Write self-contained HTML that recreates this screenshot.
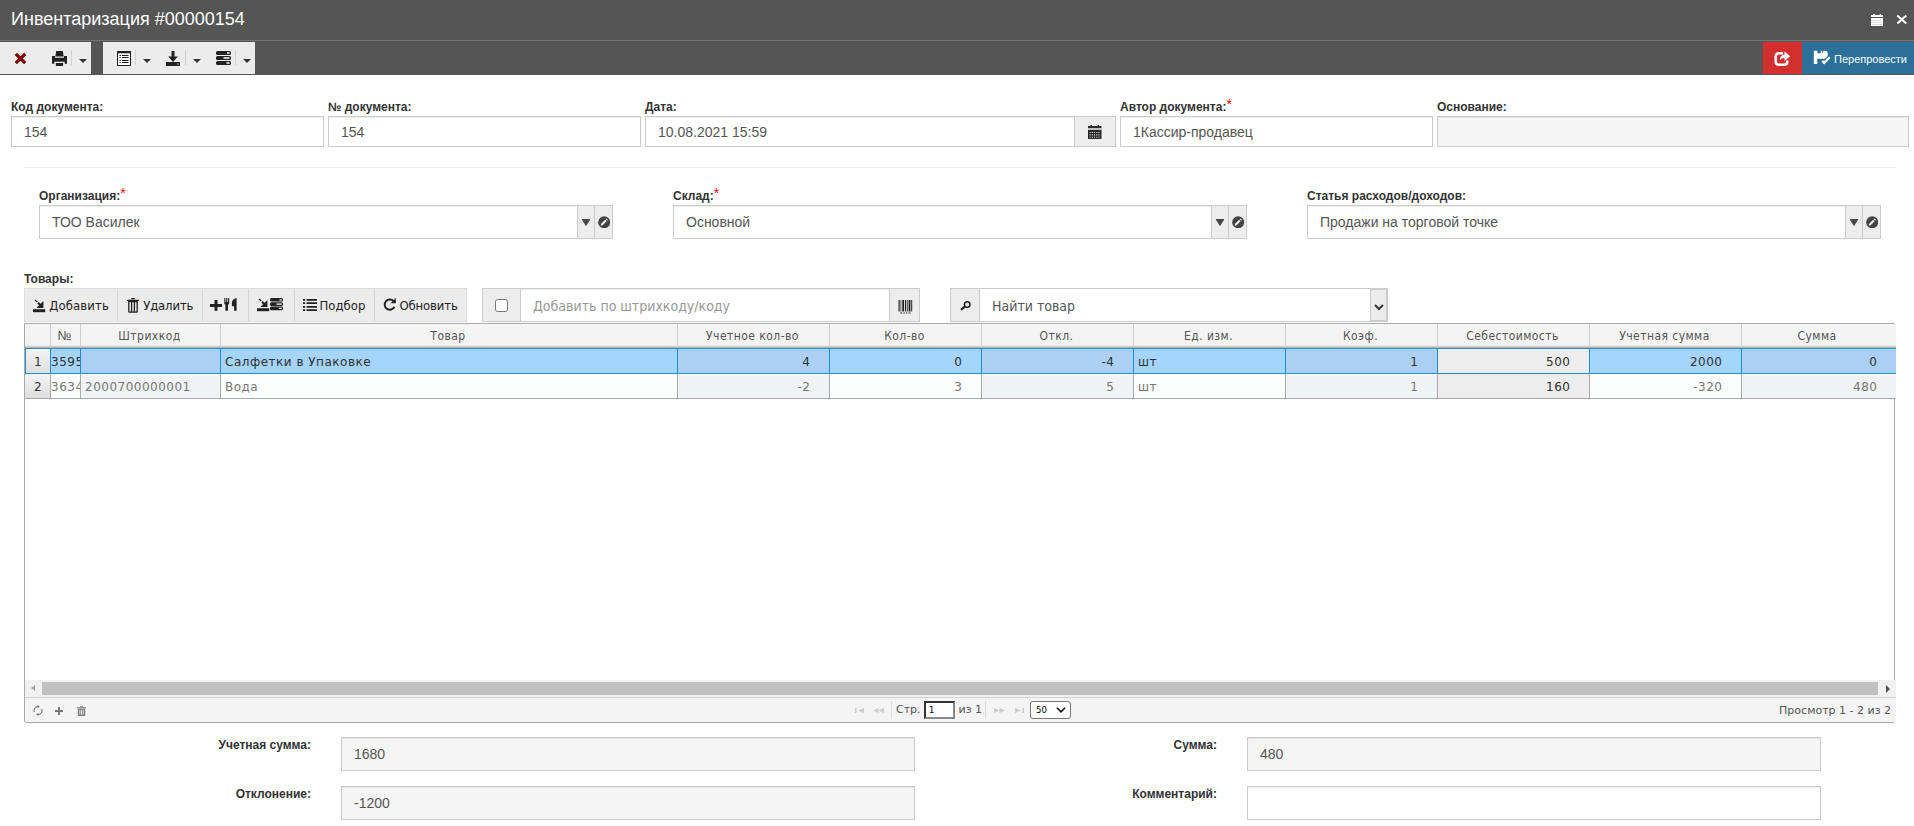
<!DOCTYPE html>
<html lang="ru">
<head>
<meta charset="utf-8">
<title>Инвентаризация #00000154</title>
<style>
*{box-sizing:border-box;margin:0;padding:0}
html,body{width:1914px;height:826px;overflow:hidden;background:#fff}
body{position:relative;font-family:"Liberation Sans",Arial,sans-serif;font-size:14px;color:#333}
.abs{position:absolute}
#titlebar{position:absolute;left:0;top:0;width:1914px;height:41px;background:#555;border-bottom:1px solid #757575}
#titlebar .t{position:absolute;left:11px;top:8px;font-size:18px;line-height:22px;color:#fff;white-space:nowrap}
#toolbar{position:absolute;left:0;top:41px;width:1914px;height:34px;background:#555}
.tg{position:absolute;top:1px;height:32px;background:#ececec}
.tsep{position:absolute;top:8px;width:1px;height:15px;background:#d0d0d0}
.caret{position:absolute;width:0;height:0;border-left:4px solid transparent;border-right:4px solid transparent;border-top:4px solid #333}
.lbl{position:absolute;font-weight:bold;font-size:12px;line-height:14px;color:#333;white-space:nowrap}
.lbl .rq{color:#f00;font-weight:normal;font-size:14px;line-height:10px;position:relative;top:-2px}
.inp{position:absolute;height:31px;border:1px solid #ccc;background:#fff;font-size:14px;line-height:31px;color:#555;padding:0 12px;white-space:nowrap;overflow:hidden;box-shadow:inset 0 1px 1px rgba(0,0,0,.075)}
.inp.h34{height:34px;line-height:33px}
.inp.dis{background:#f5f5f5}
.addon{position:absolute;border:1px solid #ccc;background:#ededed}
.tri{position:absolute;left:0;top:0;width:9px;height:7.200px;background:#444;clip-path:polygon(0 0,100% 0,50% 100%);transform:translate(3.500px,13px)}
.ed{left:2.800px;top:10.100px}
.gtb{position:absolute;left:24px;top:288px;width:443px;height:34px;background:#ececec;border:1px solid #ddd}
.gb{position:absolute;top:0;height:32px;border-right:1px solid #d4d4d4}
.gb .tx{position:absolute;top:9px;font-family:"DejaVu Sans Condensed","DejaVu Sans",sans-serif;font-size:13px;line-height:16px;color:#222;white-space:nowrap}
.ig{position:absolute;top:288px;height:34px}
.ph{font-family:"DejaVu Sans Condensed","DejaVu Sans",sans-serif;font-size:14px}
.inp.h34.ph{line-height:35px}
#grid{position:absolute;left:24px;top:323px;width:1871px;height:400px;border:1px solid #aaa;border-radius:0 0 2px 2px;background:#fff}
#ghead{position:absolute;left:0;top:0;width:1871px;height:24px;background:linear-gradient(#f5f5f5 0,#f3f3f3 21px,#e6e6e6 22px,#bdb5af 23px,#bdb5af 24px)}
.hc{position:absolute;top:0;height:23px;border-right:1px solid #cfcfcf;font-family:"DejaVu Sans Condensed","DejaVu Sans",sans-serif;font-size:12px;letter-spacing:.45px;line-height:14px;padding:5px 2px 0 0;text-align:center;color:#555;white-space:nowrap;overflow:hidden}
.gr{position:absolute;left:0;width:1871px;font-family:"DejaVu Sans",sans-serif;font-size:12px;letter-spacing:.5px;white-space:nowrap}
.gc{position:absolute;top:0;height:100%;overflow:hidden;padding:0 0 0 4px;line-height:27px}
.r1{top:24px;height:26px;border-top:1px solid #1b8fd0;border-bottom:1px solid #1b8fd0;color:#303030;background:#a5d4fd}
.r1 .gc{border-right:1px solid #1b8fd0;box-shadow:inset 0 1px 0 #b4dcff, inset 0 2px 0 rgba(110,150,190,.16)}
.r1 .g{background:#abd0f3}
.r2{top:50px;height:25px;border-bottom:1px solid #aaa;color:#777;background:#fbfdfd}
.r2 .gc{border-right:1px solid #aaa;line-height:26px;box-shadow:inset 0 1px 0 #fff}
.r2 .g{background:#f0f3f4}
.r1::before{content:"";position:absolute;left:0;top:0;width:1px;height:100%;background:#1b8fd0;z-index:2}
.gc.rn{background:linear-gradient(#f4f4f4,#dedede);color:#333;text-align:center;padding:0 0 0 1px;box-shadow:none!important}
.gc.num{text-align:right;padding-right:18.500px}
.gc.last{border-right:0!important;padding-right:18.500px}
.hc.last{border-right:0}
.gc.cost{background:#ededed!important;color:#303030;box-shadow:none!important}
#hs{position:absolute;left:0;top:356px;width:1871px;height:17px;background:#f1f1f1}
#pager{position:absolute;left:0;top:373px;width:1871px;height:25px;border-top:1px solid #d3d3d3;background:#f4f4f4;border-radius:0 0 2px 2px;font-family:"DejaVu Sans",sans-serif;font-size:11px;color:#555}
.bl{position:absolute;font-weight:bold;font-size:12px;line-height:14px;color:#333;white-space:nowrap;text-align:right}
.inp.ro{background:#f5f5f5}
</style>
</head>
<body>
<div id="titlebar"><div class="t">Инвентаризация #00000154</div>
  <svg class="abs" style="left:1870.800px;top:14px" width="12.200" height="12.200" viewBox="0 0 12.200 12.200"><path fill="#fff" d="M2.300 0h1.400v1.500H2.300zM8.700 0h1.400v1.500H8.700zM0 .9h12.200v2H0zM0 4h12.200v8.200H0z"/><path fill="#b8b8b8" d="M1.45 6.05h.9v.9h-.9zM3.45 6.05h.9v.9h-.9zM5.45 6.05h.9v.9h-.9zM7.45 6.05h.9v.9h-.9zM9.45 6.05h.9v.9h-.9zM1.45 8.05h.9v.9h-.9zM3.45 8.05h.9v.9h-.9zM5.45 8.05h.9v.9h-.9zM7.45 8.05h.9v.9h-.9zM9.45 8.05h.9v.9h-.9zM1.45 10.05h.9v.9h-.9zM3.45 10.05h.9v.9h-.9zM5.45 10.05h.9v.9h-.9zM7.45 10.05h.9v.9h-.9zM9.45 10.05h.9v.9h-.9z"/></svg>
  <svg class="abs" style="left:1896px;top:14px" width="12" height="11" viewBox="0 0 12 11"><path stroke="#fff" stroke-width="2.100" fill="none" d="M1.300 1.500l9 8M10.300 1.500l-9 8"/></svg>
</div>
<div id="toolbar">
  <div class="tg" style="left:0;width:91px">
    <svg class="abs" style="left:14px;top:10px" width="13" height="13" viewBox="0 0 13 13"><path stroke="#800000" stroke-width="3.3" fill="none" d="M1.8 1.8l9.4 9.4M11.2 1.8l-9.4 9.4"/></svg>
    <svg class="abs" style="left:52px;top:9px" width="15" height="15" viewBox="0 0 15 15"><path fill="#222" d="M4.200 .1h6.600l.9 5.400H3.300zM0 5h3v1.700h9V5h3v7.700h-2.300v-2H2.300v2H0zM3.900 12h7.200v3H3.900z"/></svg>
    <div class="tsep" style="left:71px"></div>
    <div class="caret" style="left:79px;top:17px"></div>
  </div>
  <div class="tg" style="left:103px;width:152px">
    <svg class="abs" style="left:14px;top:9px" width="14" height="15" viewBox="0 0 14 15"><path fill="#222" d="M0 0h14v15H0z"/><path fill="#fff" d="M1 2.300h12V14H1z"/><path fill="#222" d="M2.500 4h1.300v1H2.500zM5 4h6.500v1H5zM2.500 6h1.300v1H2.500zM5 6h6.500v1H5zM2.500 9h1.300v1H2.500zM5 9h6.500v1H5zM2.500 11h1.300v1H2.500zM5 11h6.500v1H5z"/></svg>
    <div class="tsep" style="left:32px"></div>
    <div class="caret" style="left:40px;top:17px"></div>
    <svg class="abs" style="left:63px;top:9px" width="14" height="15" viewBox="0 0 14 15"><path fill="#222" d="M5.500 0h3v5.500h3.300L7 11 2.200 5.500h3.300zM0 11h14v4H0z"/><path fill="#ececec" d="M11.300 12.400h1.400v1.200h-1.400z"/></svg>
    <div class="tsep" style="left:82px"></div>
    <div class="caret" style="left:90px;top:17px"></div>
    <svg class="abs" style="left:113px;top:9px" width="15" height="14" viewBox="0 0 15 14"><rect x="0" y="0" width="15" height="4" rx="1.600" fill="#222"/><rect x="0" y="5" width="15" height="4" rx="1.600" fill="#222"/><rect x="0" y="10" width="15" height="4" rx="1.600" fill="#222"/><path fill="#fff" d="M11 1.300h2.500v1.400H11zM7.500 6.300h6v1.400h-6zM10.500 11.300h3v1.400h-3z"/></svg>
    <div class="tsep" style="left:132px"></div>
    <div class="caret" style="left:140px;top:17px"></div>
  </div>
  <div class="abs" style="left:1763px;top:1px;width:39px;height:32px;background:#d32f2f">
    <svg class="abs" style="left:11px;top:9px" width="17" height="16" viewBox="0 0 17 16"><path fill="none" stroke="#fff" stroke-width="2.500" d="M9 2.200H5Q1.700 2.200 1.700 5.500V10.500Q1.700 13.800 5 13.800H10Q13.300 13.800 13.300 10.500V9.500"/><path fill="#fff" d="M10.500 .5L16.200 5.200 10.500 9.900V7Q7.500 6.800 5.800 9.300 6 3.700 10.500 3.400z"/></svg>
  </div>
  <div class="abs" style="left:1802px;top:1px;width:112px;height:32px;background:#2b7099">
    <svg class="abs" style="left:11px;top:8px" width="18" height="16" viewBox="0 0 18 16"><path fill="#fff" d="M.8 .8h3.500v2.500h3.500V.8h1.200v1.700h1.200V.8H12Q14.700 .8 14.700 3.500V6Q14.700 8.700 12 8.700H4.300V14H.8z"/><path fill="none" stroke="#2b7099" stroke-width="4.600" d="M9.200 10.900l2 2 5.600-5.600"/><path fill="none" stroke="#fff" stroke-width="2.300" d="M9.200 10.900l2 2 5.600-5.600"/></svg>
    <div class="abs" style="left:32px;top:10px;font-size:11px;line-height:14px;color:#fff;white-space:nowrap">Перепровести</div>
  </div>
</div>
<!-- row 1 -->
<div class="lbl" style="left:11px;top:100px">Код документа:</div>
<div class="inp" style="left:11px;top:116px;width:313px">154</div>
<div class="lbl" style="left:328px;top:100px">№ документа:</div>
<div class="inp" style="left:328px;top:116px;width:313px">154</div>
<div class="lbl" style="left:645px;top:100px">Дата:</div>
<div class="inp" style="left:645px;top:116px;width:431px">10.08.2021 15:59</div>
<div class="addon" style="left:1074px;top:116px;width:42px;height:31px">
  <svg class="abs" style="left:13.300px;top:7.800px" width="13.500" height="14.200" viewBox="0 0 12.200 12.200" preserveAspectRatio="none"><path fill="#2a2a2a" d="M2.300 0h1.400v1.500H2.300zM8.700 0h1.400v1.500H8.700zM0 .9h12.200v2H0zM0 4h12.200v8.200H0z"/><path fill="#e6e6e6" d="M1.45 6.05h.9v.9h-.9zM3.45 6.05h.9v.9h-.9zM5.45 6.05h.9v.9h-.9zM7.45 6.05h.9v.9h-.9zM9.45 6.05h.9v.9h-.9zM1.45 8.05h.9v.9h-.9zM3.45 8.05h.9v.9h-.9zM5.45 8.05h.9v.9h-.9zM7.45 8.05h.9v.9h-.9zM9.45 8.05h.9v.9h-.9zM1.45 10.05h.9v.9h-.9zM3.45 10.05h.9v.9h-.9zM5.45 10.05h.9v.9h-.9zM7.45 10.05h.9v.9h-.9zM9.45 10.05h.9v.9h-.9z"/><path fill="#c4c4c4" d="M0 2.900h12.200V4H0z"/></svg>
</div>
<div class="lbl" style="left:1120px;top:100px">Автор документа:<span class="rq">*</span></div>
<div class="inp" style="left:1120px;top:116px;width:313px">1Кассир-продавец</div>
<div class="lbl" style="left:1437px;top:100px">Основание:</div>
<div class="inp dis" style="left:1437px;top:116px;width:472px"></div>
<div class="abs" style="left:24px;top:167px;width:1872px;height:1px;background:#eee"></div>
<!-- row 2 -->
<div class="lbl" style="left:39px;top:189px">Организация:<span class="rq">*</span></div>
<div class="inp h34" style="left:39px;top:205px;width:539px">ТОО Василек</div>
<div class="addon" style="left:577px;top:205px;width:18px;height:34px"><div class="tri"></div></div>
<div class="addon" style="left:594px;top:205px;width:19px;height:34px"><svg class="abs ed" width="12.400" height="12.400" viewBox="0 0 13 13"><circle cx="6.500" cy="6.500" r="6.300" fill="#444"/><path fill="#eee" d="M3.300 8.200l4.200-4.200 1.500 1.500-4.200 4.200-1.900.4zM8.100 3.400l.8-.8 1.500 1.500-.8.800z"/></svg></div>
<div class="lbl" style="left:673px;top:189px">Склад:<span class="rq">*</span></div>
<div class="inp h34" style="left:673px;top:205px;width:539px">Основной</div>
<div class="addon" style="left:1211px;top:205px;width:18px;height:34px"><div class="tri"></div></div>
<div class="addon" style="left:1228px;top:205px;width:19px;height:34px"><svg class="abs ed" width="12.400" height="12.400" viewBox="0 0 13 13"><circle cx="6.500" cy="6.500" r="6.300" fill="#444"/><path fill="#eee" d="M3.300 8.200l4.200-4.200 1.500 1.500-4.200 4.200-1.900.4zM8.100 3.400l.8-.8 1.500 1.500-.8.800z"/></svg></div>
<div class="lbl" style="left:1307px;top:189px">Статья расходов/доходов:</div>
<div class="inp h34" style="left:1307px;top:205px;width:539px">Продажи на торговой точке</div>
<div class="addon" style="left:1845px;top:205px;width:18px;height:34px"><div class="tri"></div></div>
<div class="addon" style="left:1862px;top:205px;width:19px;height:34px"><svg class="abs ed" width="12.400" height="12.400" viewBox="0 0 13 13"><circle cx="6.500" cy="6.500" r="6.300" fill="#444"/><path fill="#eee" d="M3.300 8.200l4.200-4.200 1.500 1.500-4.200 4.200-1.900.4zM8.100 3.400l.8-.8 1.500 1.500-.8.800z"/></svg></div>
<!-- goods -->
<div class="lbl" style="left:24px;top:272px">Товары:</div>
<div class="gtb">
  <div class="gb" style="left:0;width:93px">
    <svg class="abs" style="left:7.800px;top:9.800px" width="13" height="14" viewBox="0 0 13 14"><path fill="#222" d="M0 10.200h12.200v3H0z"/><path fill="#222" d="M10.400 2V9H3.400zM1.600 1.500l1.100-1.100 2 2-1.100 1.100zM4.300 4.400l1.400-1.400 3.500 3.500-1.400 1.400z"/></svg>
    <div class="tx" style="left:24.300px;letter-spacing:.1px">Добавить</div>
  </div>
  <div class="gb" style="left:93px;width:85px">
    <svg class="abs" style="left:9.400px;top:8.800px" width="12" height="15" viewBox="0 0 12 15"><path fill="#222" d="M4.200 0h3.600v1.200H4.200zM0 1.800h12v1.300H0zM1.150 3.100h9.700V13.800q0 1-1 1H2.150q-1 0-1-1z"/><path fill="#ececec" d="M2.450 4.300h1.500v9.300H2.450zM5.250 4.300h1.500v9.300H5.250zM8.050 4.300h1.500v9.300H8.050z"/></svg>
    <div class="tx" style="left:25.200px;letter-spacing:-.15px">Удалить</div>
  </div>
  <div class="gb" style="left:178px;width:46px">
    <svg class="abs" style="left:7.300px;top:9px" width="28" height="14" viewBox="0 0 28 14"><path fill="#222" d="M4.500 2h3v3.900H12v3H7.500v3.800h-3V8.900H0v-3h4.500z"/><path fill="#222" d="M14.300 0h1.100v4h.8V0h1.100v4h.8V0h1.100v5.400q0 1-1.200 1.400V12.700h-2.600V6.800q-1.100-.4-1.100-1.400zM21.900 5.200q0-4.200 4.700-5.200V12.700H24.100V8.200H21.900z"/></svg>
  </div>
  <div class="gb" style="left:224px;width:46px">
    <svg class="abs" style="left:7.700px;top:9px" width="13" height="14" viewBox="0 0 13 14"><path fill="#222" d="M0 10.200h12.200v3H0z"/><path fill="#222" d="M10.400 2V9H3.400zM1.600 1.500l1.100-1.100 2 2-1.100 1.100zM4.300 4.400l1.400-1.400 3.500 3.500-1.400 1.400z"/></svg>
    <svg class="abs" style="left:21px;top:8.800px" width="13" height="13" viewBox="0 0 13 13"><rect x="0" y="0" width="13" height="3.600" rx="1.500" fill="#222"/><rect x="0" y="4.300" width="13" height="3.600" rx="1.500" fill="#222"/><rect x="0" y="8.600" width="13" height="3.600" rx="1.500" fill="#222"/><path fill="#fff" d="M9.500 1.200h2.300v1.200H9.500zM6.500 5.500h5.300v1.200H6.500zM8.800 9.800h3v1.200h-3z"/></svg>
  </div>
  <div class="gb" style="left:270px;width:80px">
    <svg class="abs" style="left:8px;top:10px" width="14" height="12" viewBox="0 0 14 12"><path fill="#222" d="M0 0h2.200v1.800H0zM3.600 0H14v1.800H3.600zM0 3.300h2.200v1.800H0zM3.600 3.300H14v1.800H3.600zM0 6.900h2.200v1.800H0zM3.600 6.900H14v1.800H3.600zM0 10.200h2.200V12H0zM3.600 10.200H14V12H3.600z"/></svg>
    <div class="tx" style="left:24.500px">Подбор</div>
  </div>
  <div class="gb" style="left:350px;width:91px;border-right:0">
    <svg class="abs" style="left:8px;top:9px" width="14" height="14" viewBox="0 0 14 14"><path fill="none" stroke="#222" stroke-width="2" d="M11.400 8.800A5.100 5.100 0 1 1 10.600 3.200"/><path fill="#222" d="M12.800 0V5.200H7.600z"/></svg>
    <div class="tx" style="left:24.500px;letter-spacing:-.15px">Обновить</div>
  </div>
</div>
<div class="addon" style="left:482px;top:288px;width:39px;height:34px"><div class="abs" style="left:12px;top:10px;width:13px;height:13px;border:1px solid #767676;border-radius:2.500px;background:#fff"></div></div>
<div class="inp h34 ph" style="left:520px;top:288px;width:370px;color:#999">Добавить по штрихкоду/коду</div>
<div class="addon" style="left:889px;top:288px;width:31px;height:34px"><svg class="abs" style="left:8px;top:10.500px" width="15" height="14" viewBox="0 0 15 14"><path fill="#222" d="M.5 0h1.200v11.500H.5zM2.600 0h.7v11.500h-.7zM4.300 0h1.800v11.500H4.300zM7 0h1.200v11.500H7zM9 0h.7v11.500H9zM10.600 0h1.800v11.500h-1.800zM13.200 0h1v11.500h-1zM2.300 12.600h2v1h-2zM5.500 12.600h1.300v1H5.500zM8 12.600h1.300v1H8zM10.500 12.600h2v1h-2z"/></svg></div>
<div class="addon" style="left:950px;top:288px;width:30px;height:34px"><svg class="abs" style="left:8.500px;top:12px" width="12" height="10" viewBox="0 0 12 10"><circle cx="7.200" cy="3.600" r="2.800" fill="#e6e6e6" stroke="#222" stroke-width="1.500"/><path stroke="#222" stroke-width="2.200" stroke-linecap="round" d="M4.600 5.900L1.700 8.200"/></svg></div>
<div class="inp h34 ph" style="left:979px;top:288px;width:409px;color:#555;box-shadow:none">Найти товар
  <div class="abs" style="right:0;top:0;width:17px;height:32px;border:1px solid #ccc;background:#ececec"><svg class="abs" style="left:3px;top:13.500px" width="10" height="7" viewBox="0 0 10 7"><path fill="none" stroke="#333" stroke-width="2" d="M1 1l4 4 4-4"/></svg></div>
</div>

<div id="grid">
<div id="ghead"><div class="hc" style="left:0px;width:26px"></div><div class="hc" style="left:26px;width:30px;font-family:'Liberation Sans',sans-serif;letter-spacing:0;font-size:13px">№</div><div class="hc" style="left:56px;width:140px">Штрихкод</div><div class="hc" style="left:196px;width:457px">Товар</div><div class="hc" style="left:653px;width:152px">Учетное кол-во</div><div class="hc" style="left:805px;width:152px">Кол-во</div><div class="hc" style="left:957px;width:152px">Откл.</div><div class="hc" style="left:1109px;width:152px">Ед. изм.</div><div class="hc" style="left:1261px;width:152px">Коэф.</div><div class="hc" style="left:1413px;width:152px">Себестоимость</div><div class="hc" style="left:1565px;width:152px">Учетная сумма</div><div class="hc last" style="left:1717px;width:152px">Сумма</div></div>
<div class="gr r1"><div class="gc rn" style="left:0px;width:26px">1</div><div class="gc " style="left:26px;width:30px;padding-left:0">3595</div><div class="gc g" style="left:56px;width:140px"></div><div class="gc " style="left:196px;width:457px">Салфетки в Упаковке</div><div class="gc g num" style="left:653px;width:152px">4</div><div class="gc num" style="left:805px;width:152px">0</div><div class="gc g num" style="left:957px;width:152px">-4</div><div class="gc " style="left:1109px;width:152px">шт</div><div class="gc g num" style="left:1261px;width:152px">1</div><div class="gc cost num" style="left:1413px;width:152px">500</div><div class="gc num" style="left:1565px;width:152px">2000</div><div class="gc g num last" style="left:1717px;width:154px">0</div></div>
<div class="gr r2"><div class="gc rn" style="left:0px;width:26px">2</div><div class="gc " style="left:26px;width:30px;padding-left:0">3634</div><div class="gc g" style="left:56px;width:140px">2000700000001</div><div class="gc " style="left:196px;width:457px">Вода</div><div class="gc g num" style="left:653px;width:152px">-2</div><div class="gc num" style="left:805px;width:152px">3</div><div class="gc g num" style="left:957px;width:152px">5</div><div class="gc " style="left:1109px;width:152px">шт</div><div class="gc g num" style="left:1261px;width:152px">1</div><div class="gc cost num" style="left:1413px;width:152px">160</div><div class="gc num" style="left:1565px;width:152px">-320</div><div class="gc g num last" style="left:1717px;width:154px">480</div></div>
<div id="hs">
  <div class="abs" style="left:6px;top:5px;width:0;height:0;border-top:3.500px solid transparent;border-bottom:3.500px solid transparent;border-right:4px solid #a3a3a3"></div>
  <div class="abs" style="left:17px;top:2px;width:1836px;height:13px;background:#c1c1c1"></div>
  <div class="abs" style="left:1860.600px;top:4.600px;width:0;height:0;border-top:4px solid transparent;border-bottom:4px solid transparent;border-left:4.500px solid #505050"></div>
</div>
<div id="pager">
  <svg class="abs" style="left:8px;top:7px" width="10" height="11" viewBox="0 0 10 11"><path fill="none" stroke="#777" stroke-width="1.100" d="M1.300 7A4 4 0 0 1 5 1.500M8.700 4A4 4 0 0 1 5 9.500"/><path fill="#777" d="M4.600 0L6.800 1.600 4.600 3.200zM5.400 7.800L3.200 9.400 5.400 11z"/></svg>
  <svg class="abs" style="left:30px;top:9px" width="8" height="8" viewBox="0 0 8 8"><path fill="#777" d="M3 0h2v3h3v2H5v3H3V5H0V3h3z"/></svg>
  <svg class="abs" style="left:52px;top:8px" width="9" height="10" viewBox="0 0 9 10"><path fill="#777" d="M3 0h3v.8H3zM0 1.300h9v1H0zM.8 2.800h7.400V9q0 1-1 1H1.800q-1 0-1-1z"/><path fill="#f4f4f4" d="M2.400 3.800h.9v5h-.9zM4.050 3.800h.9v5h-.9zM5.700 3.800h.9v5h-.9z"/></svg>
  <svg class="abs" style="left:830px;top:10px" width="10" height="5" viewBox="0 0 10 5"><path fill="#ccc" d="M0 0h1.500v5H0zM9 0v5L3 2.500z"/></svg>
  <svg class="abs" style="left:848px;top:10px" width="11" height="5" viewBox="0 0 11 5"><path fill="#ccc" d="M5.500 0v5L0 2.500zM11 0v5L5.500 2.500z"/></svg>
  <div class="abs" style="left:866px;top:3px;width:1px;height:18px;background:#ddd"></div>
  <div class="abs" style="left:871px;top:5px;line-height:14px">Стр.</div>
  <div class="abs" style="left:899px;top:3px;width:31px;height:18px;border:2px solid;border-color:#333 #888 #888 #333;background:#fff;font-size:8.500px;line-height:14px;padding-left:3px;color:#000">1</div>
  <div class="abs" style="left:933.500px;top:5px;line-height:14px">из 1</div>
  <div class="abs" style="left:960px;top:3px;width:1px;height:18px;background:#ddd"></div>
  <svg class="abs" style="left:969px;top:10px" width="11" height="5" viewBox="0 0 11 5"><path fill="#ccc" d="M0 0v5l5.500-2.500zM5.500 0v5L11 2.500z"/></svg>
  <svg class="abs" style="left:989px;top:10px" width="10" height="5" viewBox="0 0 10 5"><path fill="#ccc" d="M8.500 0H10v5H8.500zM1 0v5l6-2.500z"/></svg>
  <div class="abs" style="left:1005px;top:3px;width:41px;height:18px;border:1px solid #767676;border-radius:3px;background:#fff;font-size:8.500px;line-height:17px;padding-left:5px;color:#000">50<svg class="abs" style="left:25px;top:5px" width="10" height="6" viewBox="0 0 10 6"><path fill="none" stroke="#111" stroke-width="1.600" d="M1 .8l4 4 4-4"/></svg></div>
  <div class="abs" style="right:5px;top:6px;line-height:14px">Просмотр 1 - 2 из 2</div>
</div>
</div>

<div class="bl" style="left:111px;width:200px;top:738px">Учетная сумма:</div>
<div class="inp h34 ro" style="left:341px;top:737px;width:574px">1680</div>
<div class="bl" style="left:111px;width:200px;top:787px">Отклонение:</div>
<div class="inp h34 ro" style="left:341px;top:786px;width:574px">-1200</div>
<div class="bl" style="left:1017px;width:200px;top:738px">Сумма:</div>
<div class="inp h34 ro" style="left:1247px;top:737px;width:574px">480</div>
<div class="bl" style="left:1017px;width:200px;top:787px">Комментарий:</div>
<div class="inp h34" style="left:1247px;top:786px;width:574px"></div>

</body>
</html>
